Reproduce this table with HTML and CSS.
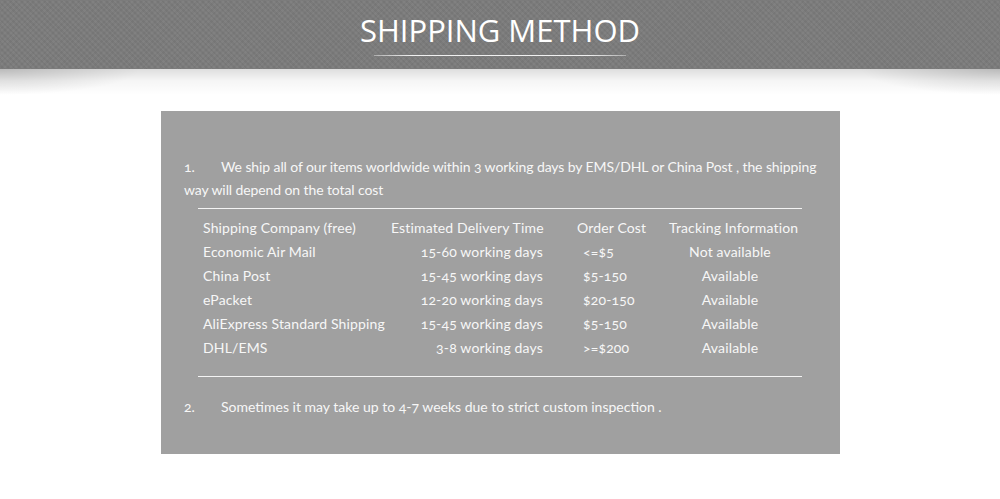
FILE: index.html
```html
<!DOCTYPE html>
<html lang="en">
<head>
<meta charset="utf-8">
<title>Shipping Method</title>
<link rel="stylesheet" href="styles.css">
</head>
<body>
<header class="banner">
  <h1 class="banner-title">SHIPPING METHOD</h1>
  <div class="banner-rule"></div>
</header>
<main class="panel">
  <p class="note note-1"><span class="num">1.</span>We ship all of our items worldwide within 3 working days by EMS/DHL or China Post , the shipping way will depend on the total cost</p>
  <hr class="rule">
  <div class="table">
    <div class="row head">
      <span class="c1">Shipping Company (free)</span>
      <span class="c2">Estimated Delivery Time</span>
      <span class="c3">Order Cost</span>
      <span class="c4">Tracking Information</span>
    </div>
    <div class="row">
      <span class="c1">Economic Air Mail</span>
      <span class="c2">15-60 working days</span>
      <span class="c3">&lt;=$5</span>
      <span class="c4">Not available</span>
    </div>
    <div class="row">
      <span class="c1">China Post</span>
      <span class="c2">15-45 working days</span>
      <span class="c3">$5-150</span>
      <span class="c4">Available</span>
    </div>
    <div class="row">
      <span class="c1">ePacket</span>
      <span class="c2">12-20 working days</span>
      <span class="c3">$20-150</span>
      <span class="c4">Available</span>
    </div>
    <div class="row">
      <span class="c1">AliExpress Standard Shipping</span>
      <span class="c2">15-45 working days</span>
      <span class="c3">$5-150</span>
      <span class="c4">Available</span>
    </div>
    <div class="row">
      <span class="c1">DHL/EMS</span>
      <span class="c2">3-8 working days</span>
      <span class="c3">&gt;=$200</span>
      <span class="c4">Available</span>
    </div>
  </div>
  <hr class="rule rule-bottom">
  <p class="note note-2"><span class="num">2.</span>Sometimes it may take up to 4-7 weeks due to strict custom inspection .</p>
</main>
</body>
</html>
```

FILE: styles.css
```css
html, body {
  margin: 0;
  padding: 0;
  background: #ffffff;
}
body {
  width: 1000px;
  height: 499px;
  overflow: hidden;
  font-family: "Lato", "Open Sans", sans-serif;
  font-variant-numeric: oldstyle-nums;
  position: relative;
}
.banner {
  position: relative;
  height: 69px;
  background-color: #7b7b7b;
  background-image:
    repeating-linear-gradient(45deg, rgba(255,255,255,0.025) 0 2px, rgba(0,0,0,0.025) 2px 4px),
    repeating-linear-gradient(-45deg, rgba(255,255,255,0.02) 0 2px, rgba(0,0,0,0.02) 2px 4px);
  display: flex;
  flex-direction: column;
  align-items: center;
}
.banner::after {
  content: "";
  position: absolute;
  left: 0;
  right: 0;
  top: 69px;
  height: 26px;
  background:
    radial-gradient(ellipse 140px 26px at 0 0, rgba(0,0,0,0.16), transparent),
    radial-gradient(ellipse 140px 26px at 100% 0, rgba(0,0,0,0.16), transparent),
    linear-gradient(to bottom, rgba(0,0,0,0.13), rgba(0,0,0,0.04) 45%, transparent);
}
.banner-title {
  margin: 11px 0 0;
  font-family: "Open Sans", sans-serif;
  font-weight: 400;
  font-size: 31px;
  line-height: 38px;
  color: #ffffff;
  letter-spacing: 0;
}
.banner-rule {
  margin-top: 6px;
  width: 252px;
  height: 1px;
  background: linear-gradient(to right, rgba(255,255,255,0.4), #f0f0f0 15%, #f0f0f0 85%, rgba(255,255,255,0.4));
}
.panel {
  width: 679px;
  height: 343px;
  box-sizing: border-box;
  margin: 42px 0 0 161px;
  background: #a0a0a0;
  padding: 44px 23px 0;
  color: #f7f7f7;
  font-size: 14px;
}
.note {
  margin: 0;
  line-height: 23px;
  width: 640px;
}
.note-1 {
  letter-spacing: -0.1px;
}
.num {
  display: inline-block;
  width: 37px;
  letter-spacing: 0;
}
.rule {
  border: 0;
  height: 1px;
  background: #f4f4f4;
  width: 604px;
  margin: 7px 0 0 14px;
}
.table {
  margin-top: 7px;
}
.row {
  display: grid;
  grid-template-columns: 188px 152px 34px 67px 25px 130px;
  height: 24px;
  line-height: 24px;
  padding-left: 19px;
  white-space: nowrap;
  letter-spacing: 0.15px;
}
.c1 { grid-column: 1; }
.c2 { grid-column: 2; text-align: right; }
.c3 { grid-column: 4; padding-left: 6px; }
.c4 { grid-column: 6; text-align: center; padding-right: 8px; }
.head .c2, .head .c3, .head .c4 { text-align: left; padding: 0; }
.rule-bottom {
  margin-top: 16px;
}
.note-2 {
  margin-top: 18px;
}
```
